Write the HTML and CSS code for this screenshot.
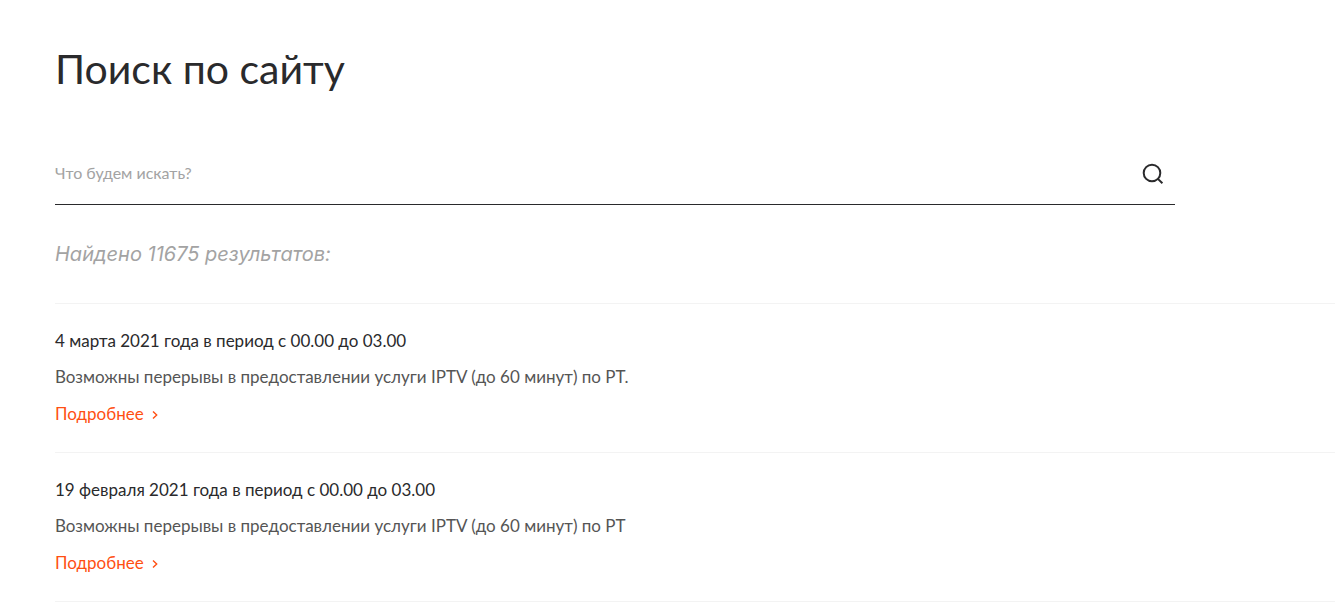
FILE: index.html
```html
<!DOCTYPE html>
<html lang="ru">
<head>
<meta charset="utf-8">
<meta name="viewport" content="width=device-width, initial-scale=1">
<title>Поиск по сайту</title>
<link rel="stylesheet" href="styles.css">
</head>
<body>
<main class="page">
  <h1 class="title">Поиск по сайту</h1>
  <form class="search" role="search">
    <input class="search-input" type="text" aria-label="Поиск" placeholder="Что будем искать?">
    <button class="search-button" type="submit" aria-label="Найти">
      <svg width="24" height="24" viewBox="0 0 24 24" fill="none" stroke="currentColor" stroke-width="2"><circle cx="11" cy="12" r="8.3"/><path d="M16.6 17.6l4.8 4.6"/></svg>
    </button>
  </form>
  <p class="count">Найдено 11675 результатов:</p>
  <section class="results">
    <article class="result">
      <h2 class="result-title">4 марта 2021 года в период с 00.00 до 03.00</h2>
      <p class="result-text">Возможны перерывы в предоставлении услуги IPTV (до 60 минут) по РТ.</p>
      <a class="more" href="#">Подробнее<svg class="chevron" width="6" height="8" viewBox="0 0 6 8" fill="none" stroke="currentColor" stroke-width="1.4"><path d="M1 .5L4.7 4L1 7.5"/></svg></a>
    </article>
    <article class="result">
      <h2 class="result-title">19 февраля 2021 года в период с 00.00 до 03.00</h2>
      <p class="result-text">Возможны перерывы в предоставлении услуги IPTV (до 60 минут) по РТ</p>
      <a class="more" href="#">Подробнее<svg class="chevron" width="6" height="8" viewBox="0 0 6 8" fill="none" stroke="currentColor" stroke-width="1.4"><path d="M1 .5L4.7 4L1 7.5"/></svg></a>
    </article>
  </section>
</main>
</body>
</html>
```
FILE: styles.css
```css
* { box-sizing: border-box; }
body {
  margin: 0;
  background: #fff;
  color: #2a2a2c;
  font-family: Lato, "Noto Sans", sans-serif;
  font-size: 17px;
}
.page { padding: 44px 0 0 55px; }
.title {
  margin: 0;
  font-size: 41px;
  line-height: 50px;
  font-weight: 400;
}
.search {
  display: flex;
  align-items: center;
  max-width: 1120px;
  margin: 48px 160px 0 0;
  height: 63px;
  border-bottom: 1px solid #2a2a2c;
}
.search-input {
  flex: 1;
  min-width: 0;
  padding: 0;
  border: 0;
  outline: 0;
  background: none;
  color: inherit;
  font: inherit;
  font-size: 16px;
  line-height: 24px;
}
.search-input::placeholder { color: #a3a3a3; opacity: 1; }
.search-button {
  display: flex;
  padding: 0 10px;
  border: 0;
  background: none;
  color: inherit;
  cursor: pointer;
}
.count {
  margin: 36px 0;
  color: #a3a3a3;
  font-family: Inter, sans-serif;
  font-size: 20px;
  font-style: italic;
  font-weight: 400;
  line-height: 26px;
}
.results { border-top: 1px solid #f3f3f3; }
.result {
  padding: 25px 0 26px;
  border-bottom: 1px solid #f3f3f3;
}
.result-title {
  margin: 0 0 12px;
  font-size: 17px;
  font-weight: 400;
  line-height: 24px;
}
.result-text {
  margin: 0 0 13px;
  color: #555;
  line-height: 24px;
}
.more {
  display: flex;
  width: fit-content;
  align-items: center;
  gap: 8px;
  color: #ff4f12;
  line-height: 24px;
  text-decoration: none;
}
.chevron { margin-top: 1px; }
```
